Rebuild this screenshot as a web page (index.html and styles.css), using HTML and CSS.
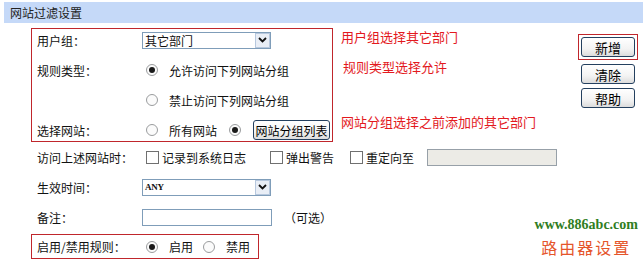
FILE: index.html
```html
<!DOCTYPE html>
<html lang="zh-CN">
<head>
<meta charset="utf-8">
<title>网站过滤设置</title>
<link rel="stylesheet" href="styles.css">
</head>
<body>
<div class="header">网站过滤设置</div>
<div class="page">
  <div class="form">
    <div class="top">
      <div class="box box1">
        <div class="row">
          <span class="label">用户组：</span>
          <div class="select"><span class="select-text">其它部门</span><span class="select-arrow"><svg width="9" height="6" viewBox="0 0 9 6"><path d="M1 1 L4.5 4.5 L8 1" fill="none" stroke="#111" stroke-width="1.8"/></svg></span></div>
        </div>
        <div class="row">
          <span class="label">规则类型：</span>
          <span class="radio on"></span><span class="rtext">允许访问下列网站分组</span>
        </div>
        <div class="row">
          <span class="label"></span>
          <span class="radio"></span><span class="rtext">禁止访问下列网站分组</span>
        </div>
        <div class="row">
          <span class="label">选择网站：</span>
          <span class="radio"></span><span class="rtext">所有网站</span>
          <span class="radio on r2"></span>
          <span class="btn btn-list">网站分组列表</span>
        </div>
      </div>
      <div class="notes">
        <div class="note n1">用户组选择其它部门</div>
        <div class="note n2">规则类型选择允许</div>
        <div class="note n3">网站分组选择之前添加的其它部门</div>
      </div>
    </div>
    <div class="rows">
      <div class="row">
        <span class="label">访问上述网站时：</span>
        <span class="check"></span><span class="ctext">记录到系统日志</span>
        <span class="check c2"></span><span class="ctext">弹出警告</span>
        <span class="check c3"></span><span class="ctext">重定向至</span>
        <span class="input disabled"></span>
      </div>
      <div class="row">
        <span class="label">生效时间：</span>
        <div class="select"><span class="select-text any">ANY</span><span class="select-arrow"><svg width="9" height="6" viewBox="0 0 9 6"><path d="M1 1 L4.5 4.5 L8 1" fill="none" stroke="#111" stroke-width="1.8"/></svg></span></div>
      </div>
      <div class="row">
        <span class="label">备注：</span>
        <span class="input"></span><span class="opt">（可选）</span>
      </div>
    </div>
    <div class="box box2">
      <div class="row">
        <span class="label">启用/禁用规则：</span>
        <span class="radio on"></span><span class="rtext">启用</span>
        <span class="radio r3"></span><span class="rtext">禁用</span>
      </div>
    </div>
  </div>
  <div class="side">
    <div class="hl"><span class="btn btn-side">新增</span></div>
    <span class="btn btn-side">清除</span>
    <span class="btn btn-side">帮助</span>
  </div>
</div>
<div class="stamp">
  <div class="url">www.886abc.com</div>
  <div class="brand">路由器设置</div>
</div>
</body>
</html>
```

FILE: styles.css
```css
html, body {
  margin: 0;
  padding: 0;
  background: #fff;
  overflow: hidden;
}
body {
  width: 643px;
  height: 266px;
  position: relative;
  font-family: "Noto Sans CJK SC", "Liberation Sans", sans-serif;
  font-size: 12px;
  color: #111;
}
.header {
  margin: 2px 0 0 4px;
  height: 21px;
  line-height: 21px;
  padding-left: 6px;
  background: #c5d9f8;
  color: #222;
  font-size: 12px;
}
.page {
  display: flex;
  margin-top: 5px;
}
.form {
  width: 578px;
}
.top {
  display: flex;
}
.box {
  border: 1px solid #c0262c;
  margin-left: 31px;
  box-sizing: border-box;
}
.box1 {
  width: 302px;
  height: 114px;
  display: flex;
  flex-direction: column;
  gap: 8px;
}
.row {
  display: flex;
  align-items: center;
  height: 22px;
  padding-left: 5px;
  white-space: nowrap;
}
.label {
  width: 105px;
  flex: none;
}
.select {
  width: 129px;
  height: 17px;
  box-sizing: border-box;
  border: 1px solid #7f9db9;
  display: flex;
  align-items: stretch;
  background: #fff;
}
.select-text {
  flex: 1;
  padding-left: 2px;
  line-height: 15px;
  font-size: 12px;
}
.select-text.any {
  font-family: "Liberation Serif", serif;
  font-weight: bold;
  font-size: 9px;
  letter-spacing: -0.3px;
}
.select-arrow {
  width: 15px;
  box-sizing: border-box;
  border: 1px solid #b7c8de;
  background: #e9eef6;
  display: flex;
  align-items: center;
  justify-content: center;
}
.radio {
  width: 12px;
  height: 12px;
  box-sizing: border-box;
  border: 1px solid #9a9c9e;
  border-radius: 50%;
  background: #fbfbfb;
  margin-left: 4px;
  display: flex;
  align-items: center;
  justify-content: center;
  flex: none;
}
.radio.on::after {
  content: "";
  width: 6px;
  height: 6px;
  border-radius: 50%;
  background: #1a1a1a;
}
.radio.r2 {
  margin-left: 12px;
}
.radio.r3 {
  margin-left: 10px;
}
.rtext {
  margin-left: 11px;
}
.btn {
  box-sizing: border-box;
  border: 1px solid #24405f;
  border-radius: 3px;
  background: linear-gradient(#ffffff, #f3f3f3 60%, #dcdcdc);
  display: flex;
  align-items: center;
  justify-content: center;
  color: #000;
}
.btn-list {
  margin-left: 12px;
  width: 77px;
  height: 20px;
  font-size: 12px;
}
.notes {
  margin-left: 8px;
  display: flex;
  flex-direction: column;
  color: #e3191e;
  font-size: 13px;
  line-height: 17px;
}
.note.n2 {
  margin-top: 13px;
  margin-left: 2px;
}
.note.n3 {
  margin-top: 38px;
}
.rows {
  margin-left: 32px;
  margin-top: 4px;
  display: flex;
  flex-direction: column;
  gap: 8px;
}
.check {
  width: 13px;
  height: 13px;
  box-sizing: border-box;
  border: 1px solid #707070;
  background: #fff;
  margin-left: 4px;
  flex: none;
}
.check.c2 {
  margin-left: 24px;
}
.check.c3 {
  margin-left: 16px;
}
.ctext {
  margin-left: 3px;
}
.input {
  width: 130px;
  height: 17px;
  box-sizing: border-box;
  border: 1px solid #7f9db9;
  background: #fff;
}
.input.disabled {
  margin-left: 13px;
  border-color: #97a0a8;
  background: #ecebe6;
}
.opt {
  margin-left: 12px;
}
.box2 {
  width: 228px;
  margin-top: 6px;
  height: 25px;
  display: flex;
  align-items: center;
}
.box2 .row {
  height: 23px;
}
.side {
  display: flex;
  flex-direction: column;
  align-items: flex-start;
  gap: 4px;
  padding-top: 6px;
}
.hl {
  border: 1px solid #c0262c;
  padding: 2px;
  margin-left: 0;
}
.btn-side {
  width: 54px;
  height: 20px;
  font-size: 13px;
  margin-left: 3px;
}
.hl .btn-side {
  margin-left: 0;
}
.stamp {
  position: absolute;
  right: 5px;
  top: 216px;
  display: flex;
  flex-direction: column;
  align-items: center;
}
.url {
  font-family: "Liberation Serif", serif;
  font-weight: bold;
  font-size: 14px;
  color: #2f7d22;
  line-height: 18px;
}
.brand {
  font-size: 16px;
  color: #e5552b;
  letter-spacing: 2px;
  line-height: 22px;
  margin-top: 2px;
}
```
